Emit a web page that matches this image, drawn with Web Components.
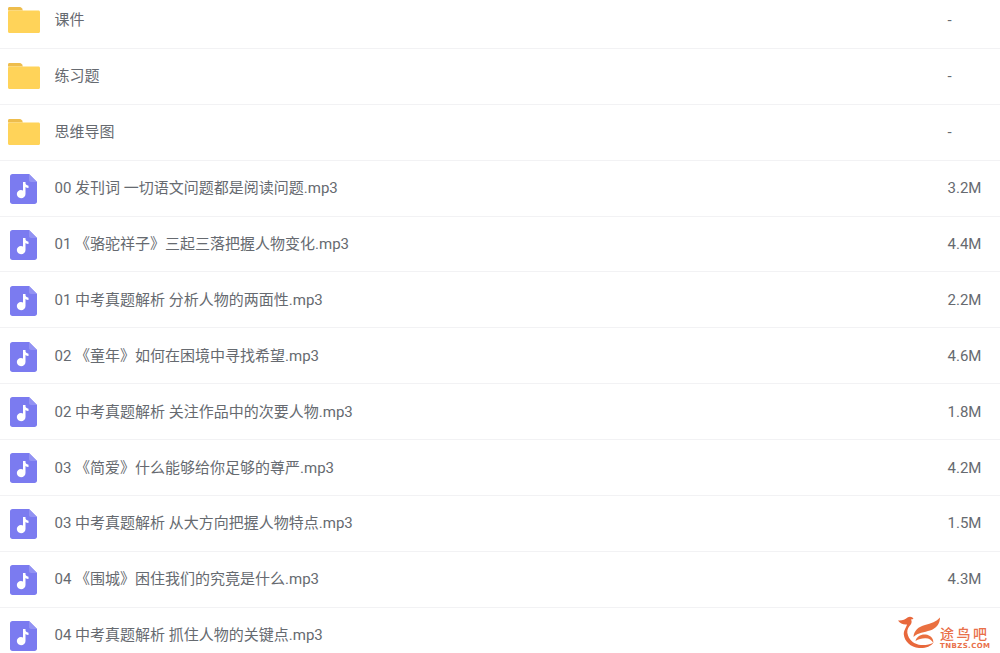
<!DOCTYPE html>
<html lang="zh">
<head>
<meta charset="utf-8">
<title>file list</title>
<style>
html, body { margin: 0; height: 100%; overflow: hidden; background: #fff; }
</style>
</head>
<body>
<file-list>
    <file-row type="folder" name="课件" size="-"></file-row>
    <file-row type="folder" name="练习题" size="-"></file-row>
    <file-row type="folder" name="思维导图" size="-"></file-row>
    <file-row type="audio" name="00 发刊词 一切语文问题都是阅读问题.mp3" size="3.2M"></file-row>
    <file-row type="audio" name="01 《骆驼祥子》三起三落把握人物变化.mp3" size="4.4M"></file-row>
    <file-row type="audio" name="01 中考真题解析 分析人物的两面性.mp3" size="2.2M"></file-row>
    <file-row type="audio" name="02 《童年》如何在困境中寻找希望.mp3" size="4.6M"></file-row>
    <file-row type="audio" name="02 中考真题解析 关注作品中的次要人物.mp3" size="1.8M"></file-row>
    <file-row type="audio" name="03 《简爱》什么能够给你足够的尊严.mp3" size="4.2M"></file-row>
    <file-row type="audio" name="03 中考真题解析 从大方向把握人物特点.mp3" size="1.5M"></file-row>
    <file-row type="audio" name="04 《围城》困住我们的究竟是什么.mp3" size="4.3M"></file-row>
    <file-row type="audio" name="04 中考真题解析 抓住人物的关键点.mp3" size=""></file-row>
</file-list>
<site-mark></site-mark>
<script>
const ICONS = {
    folder: `<svg width="32" height="26" viewBox="0 0 32 26">
        <path d="M1.500 0H11.500c1 0 1.800.4 2.400 1.200L15 3.500H0V1.500C0 .6.600 0 1.500 0z" fill="#eebd4c"/>
        <path d="M0 5C0 4.100.6 3.500 1.500 3.500H30.500C31.400 3.500 32 4.100 32 5V24.500C32 25.400 31.400 26 30.500 26H1.500C.6 26 0 25.400 0 24.500z" fill="#ffd359"/>
    </svg>`,
    audio: `<svg width="27" height="30" viewBox="0 0 27 30">
        <path d="M2.500 0H19L27 8V27.500C27 29 26 30 24.500 30H2.500C1 30 0 29 0 27.500V2.500C0 1 1 0 2.500 0z" fill="#7b7bf0"/>
        <path d="M19 0L27 8H21C19.800 8 19 7.200 19 6z" fill="#9292f3"/>
        <path d="M13 8H15.500V9.300C15.500 10.500 16.500 11.300 18.500 11.700V14C17.200 13.900 16.200 13.500 15.500 13V20C15.500 22.500 13.500 24.200 11 24.200C8.700 24.200 6.800 22.400 6.800 20.100C6.800 17.900 8.700 16 11 16C11.700 16 12.400 16.200 13 16.500z" fill="#fff"/>
    </svg>`
};

class FileRow extends HTMLElement {
    connectedCallback() {
        const type = this.getAttribute("type");
        const root = this.attachShadow({mode: "open"});
        root.innerHTML = `<style>
            :host {
                display: flex;
                align-items: center;
                box-sizing: border-box;
                height: 55.9px;
                border-bottom: 1px solid #f2f2f4;
                font: 15px/20px Roboto, "Noto Sans CJK SC", sans-serif;
                color: #666a70;
            }
            .icon {
                flex: none;
                width: 54.500px;
                display: flex;
                padding: ${type === "folder" ? "0 0 0 8px" : "1.500px 0 0 10px"};
                box-sizing: border-box;
            }
            .name { flex: 1; white-space: nowrap; }
            .size { flex: none; width: 52.500px; }
        </style>
        <span class="icon">${ICONS[type]}</span>
        <span class="name">${this.getAttribute("name")}</span>
        <span class="size">${this.getAttribute("size")}</span>`;
    }
}
customElements.define("file-row", FileRow);

class FileList extends HTMLElement {
    constructor() {
        super();
        this.attachShadow({mode: "open"}).innerHTML = `<style>
            :host { display: block; margin-top: -7px; }
        </style><slot></slot>`;
    }
}
customElements.define("file-list", FileList);

// watermark in the bottom right corner, sits over the last row
class SiteMark extends HTMLElement {
    constructor() {
        super();
        this.attachShadow({mode: "open"}).innerHTML = `<style>
            :host {
                position: absolute;
                left: 898px;
                top: 616px;
                display: flex;
            }
            .txt { display: flex; flex-direction: column; margin-top: 10px; color: #e9704a; }
            .cn { font: 500 14px/14px "Noto Sans CJK SC", sans-serif; letter-spacing: 2.500px; }
            .en { font: 700 7px/8px "DejaVu Sans", sans-serif; letter-spacing: .4px; margin-top: 2px; }
        </style>
        <svg width="42" height="33" viewBox="0 0 42 33">
            <path d="M0 4.500C4 5 7 3.500 9.500 1.500C11.500 0 14.500 .5 15.500 3L13 3.500C14.500 6 13 8.500 11.500 10C9.500 12.500 8.500 15.500 10 19.500C12 25 17 28.500 23 29C27.500 29.300 32 28.500 35.500 26.500C33 30.500 27 32.500 21 32C12.500 31 6.500 25.500 5.800 18.500C5.500 14.500 8.500 11 9 8.500C5.500 9 2 7.500 0 4.500z" fill="#e8683c"/>
            <path d="M42 1.500C42 8 38 12.500 32 14.500C26.500 16.300 20 16.500 15.500 21C15.800 15 20.500 10.500 27 9C33 7.500 38.500 5.500 42 1.500z" fill="#ea7040"/>
            <path d="M17.500 25C18.500 20.500 23 18 27.500 18.500C32.500 19 35.800 22.500 35.300 27C33.500 23.800 30.500 22 27 22.300C23.500 22.500 20.500 23.200 17.500 25z" fill="#ea7040"/>
        </svg>
        <div class="txt">
            <span class="cn">途鸟吧</span>
            <span class="en">TNBZS.COM</span>
        </div>`;
    }
}
customElements.define("site-mark", SiteMark);
</script>
</body>
</html>
